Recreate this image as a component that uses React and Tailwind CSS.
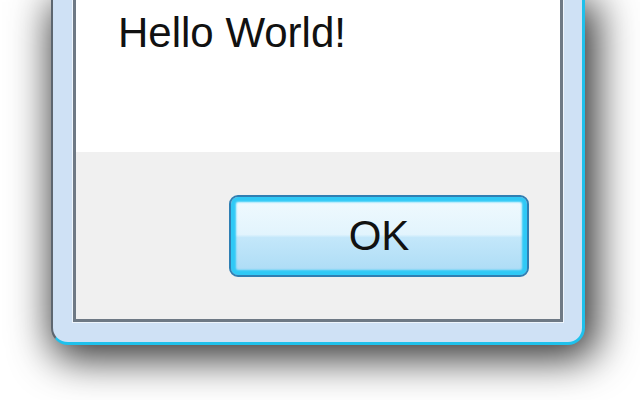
import React from 'react';

// Message box with a glass-style frame, cut off at the top edge of the page
const MessageBox = ({ message, onOk }) => {
    return (
        <div className="ml-[51px] w-[534px] bg-[#cfe1f5] border-l-2 border-l-[#5d6670] border-r-[3px] border-r-[#1fc1ec] border-b-[3px] border-b-[#1fc1ec] rounded-b-[17px] pl-[20px] pr-[19px] pb-[20px] shadow-[6px_8px_40px_6px_rgba(0,0,0,0.8)]">
            {/* Client area */}
            <div className="border-x-[3px] border-b-[3px] border-[#6e7985] shadow-[0_0_0_1px_#eef5fc]">
                <div className="h-[152px] bg-white pl-[42px] pt-[9px]">
                    <p className="text-[42px] leading-[48px] text-[#111] font-['Liberation_Sans',Arial,sans-serif]">
                        {message}
                    </p>
                </div>
                <div className="h-[167px] bg-[#f0f0f0] flex justify-end pt-[43px] pr-[31px]">
                    <button
                        onClick={onOk}
                        className="w-[300px] h-[82px] rounded-[9px] border-2 border-[#2f7fb3] shadow-[inset_0_0_2px_5px_#2fc9f6] bg-[linear-gradient(to_bottom,#f1fafe_0%,#e2f4fd_48%,#c3e7fa_52%,#abdbf5_100%)] text-[42px] leading-none text-[#111] font-['Liberation_Sans',Arial,sans-serif]"
                    >
                        OK
                    </button>
                </div>
            </div>
        </div>
    );
};

const App = () => {
    return (
        <div className="w-[640px] h-[400px] bg-white overflow-hidden">
            <MessageBox message="Hello World!" onOk={() => {}} />
        </div>
    );
};

export default App;
